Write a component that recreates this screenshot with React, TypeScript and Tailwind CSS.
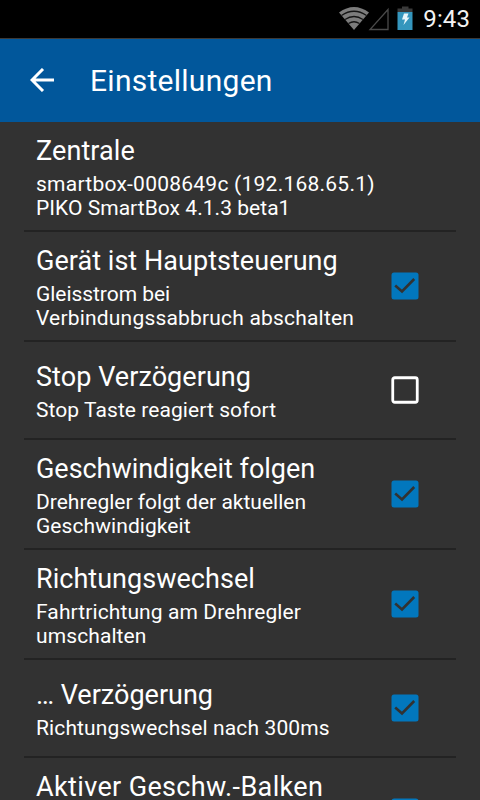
interface SettingItem {
  title: string;
  titleClass: string;
  lines: { text: string; className: string }[];
  tall: boolean;
  checked?: boolean;
}

const settings: SettingItem[] = [
  {
    title: 'Zentrale',
    titleClass: 'tracking-[0.1px]',
    lines: [
      { text: 'smartbox-0008649c (192.168.65.1)', className: 'tracking-[0.24px]' },
      { text: 'PIKO SmartBox 4.1.3 beta1', className: 'tracking-[0.04px]' },
    ],
    tall: true,
  },
  {
    title: 'Gerät ist Hauptsteuerung',
    titleClass: 'tracking-[0.04px]',
    lines: [
      { text: 'Gleisstrom bei', className: 'tracking-[-0.05px]' },
      { text: 'Verbindungssabbruch abschalten', className: 'tracking-[0.19px]' },
    ],
    tall: true,
    checked: true,
  },
  {
    title: 'Stop Verzögerung',
    titleClass: 'tracking-[0.06px]',
    lines: [{ text: 'Stop Taste reagiert sofort', className: 'tracking-[0.07px]' }],
    tall: false,
    checked: false,
  },
  {
    title: 'Geschwindigkeit folgen',
    titleClass: 'tracking-[-0.04px]',
    lines: [
      { text: 'Drehregler folgt der aktuellen', className: '' },
      { text: 'Geschwindigkeit', className: 'tracking-[0.07px]' },
    ],
    tall: true,
    checked: true,
  },
  {
    title: 'Richtungswechsel',
    titleClass: 'tracking-[0.03px]',
    lines: [
      { text: 'Fahrtrichtung am Drehregler', className: 'tracking-[0.1px]' },
      { text: 'umschalten', className: 'tracking-[0.1px]' },
    ],
    tall: true,
    checked: true,
  },
  {
    title: '… Verzögerung',
    titleClass: '',
    lines: [{ text: 'Richtungswechsel nach 300ms', className: 'tracking-[0.12px]' }],
    tall: false,
    checked: true,
  },
  {
    title: 'Aktiver Geschw.-Balken',
    titleClass: 'tracking-[0.36px] mb-[48px]',
    lines: [],
    tall: true,
    checked: true,
  },
];

function StatusBar() {
  return (
    <div className="flex h-[39px] shrink-0 items-center border-b border-[#3c3a38] bg-black pr-[10px] pl-[338px]">
      <svg className="h-[38px] w-[78px] shrink-0" viewBox="0 0 78 38">
        {/* Wi-Fi */}
        <path d="M1 12.500Q16 1.500 31 12.500L16 30Z" fill="#7c7c7c" />
        <path d="M3.500 15.500Q16 7 28.500 15.500M7 19.500Q16 13.500 25 19.500M10.500 23.500Q16 20 21.500 23.500" fill="none" stroke="#141414" strokeWidth="1.300" />
        {/* Mobile signal */}
        <path d="M50 9.500V29.500H32Z" fill="none" stroke="#4a4a4a" strokeWidth="1.300" />
        {/* Battery */}
        <path d="M64 6.500H70.500V8.500H74.500V12H59.500V8.500H64Z" fill="#3a3a3a" />
        <path d="M59.500 12H74.500V30H59.500Z" fill="#3596bd" />
        <path d="M66 13.500H70.500L69 17.500H71.500L65.500 25L67 19.500H64Z" fill="#e8f6fb" />
      </svg>
      <span className="ml-auto text-[24px] leading-[38px] tracking-[0.1px] text-[#f3f3f3]">9:43</span>
    </div>
  );
}

function Checkbox({ checked }: { checked: boolean }) {
  return (
    <svg className="h-[28px] w-[28px] shrink-0" viewBox="0 0 28 28">
      {checked ? (
        <>
          <rect x="0.500" y="0.500" width="27" height="27" rx="2.500" fill="#0277bd" />
          <path d="M4.200 13.500L11 19.500L23.200 7" fill="none" stroke="#323232" strokeWidth="2.600" />
        </>
      ) : (
        <rect x="1.750" y="1.750" width="24.500" height="24.500" rx="2" fill="none" stroke="#fff" strokeWidth="2.800" />
      )}
    </svg>
  );
}

function SettingRow({ item }: { item: SettingItem }) {
  return (
    <div
      className={`flex shrink-0 items-center border-b-2 border-[#232323] pr-[37px] pl-3 ${
        item.tall ? 'h-[110px]' : 'h-[98px]'
      }`}
    >
      <div className="flex-1 pt-[3px] whitespace-nowrap">
        <div className="pb-[5px]">
          <div className={`text-[27px] leading-[32px] ${item.titleClass}`}>{item.title}</div>
        </div>
        {item.lines.map((line) => (
          <div key={line.text} className={`text-[21px] leading-[24px] ${line.className}`}>
            {line.text}
          </div>
        ))}
      </div>
      {item.checked !== undefined && <Checkbox checked={item.checked} />}
    </div>
  );
}

export default function App() {
  return (
    <div className="flex h-[800px] w-[480px] flex-col overflow-hidden bg-[#323232] font-['Roboto',sans-serif] text-white">
      <StatusBar />

      <header className="flex h-[83px] shrink-0 items-center bg-[#01579b] pl-[30px]">
        <svg className="mb-[2px] h-[24px] w-[24px]" viewBox="0 0 24 24">
          <path d="M24 12H2M13 1L2 12L13 23" fill="none" stroke="#fff" strokeWidth="3" />
        </svg>
        <h1 className="ml-[36px] text-[30px] leading-[36px] tracking-[0.27px]">Einstellungen</h1>
      </header>

      <main className="flex flex-1 flex-col overflow-hidden px-6">
        {settings.map((item) => (
          <SettingRow key={item.title} item={item} />
        ))}
      </main>
    </div>
  );
}
